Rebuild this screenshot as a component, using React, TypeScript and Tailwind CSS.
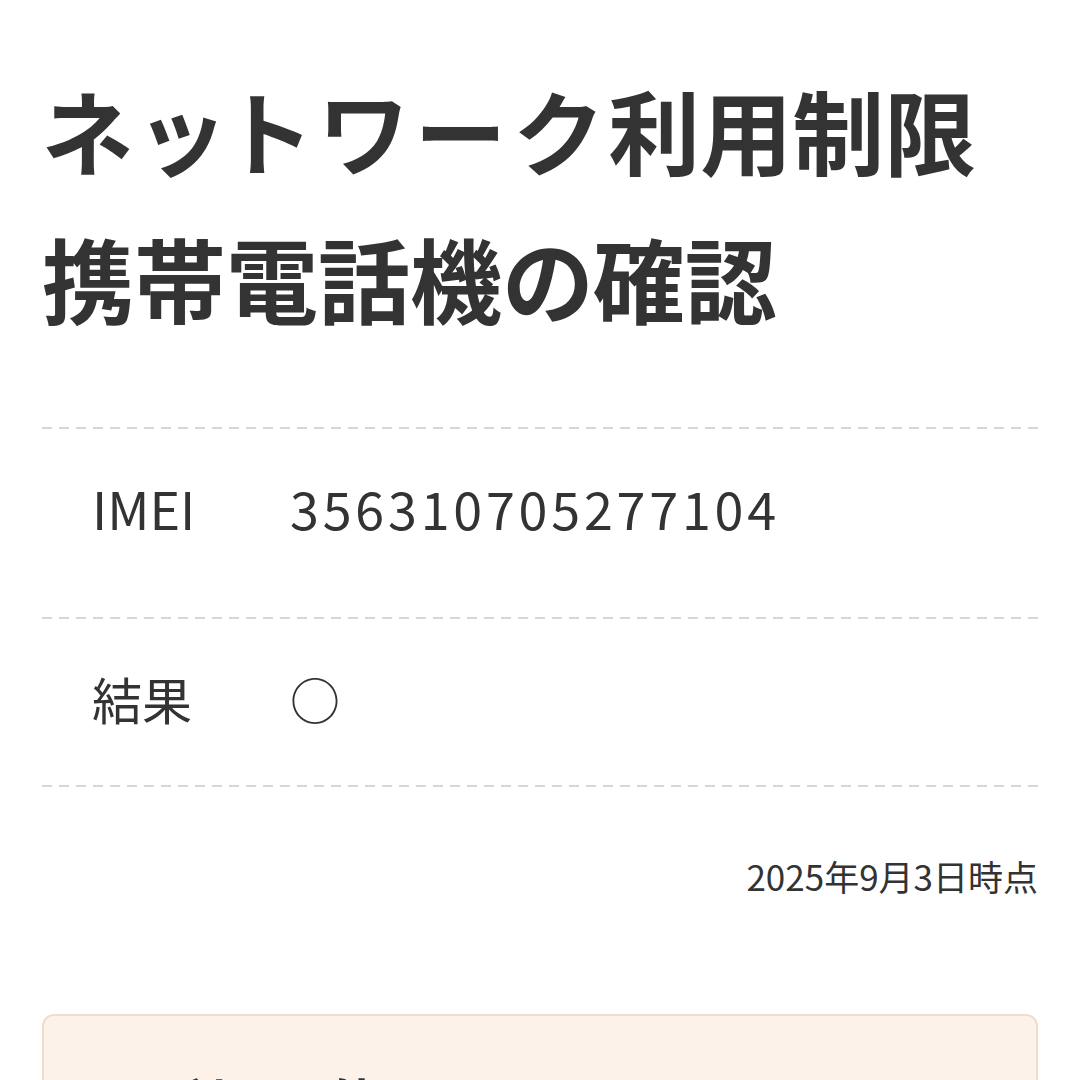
import React from 'react';

const dash =
    'h-[2px] w-full bg-[repeating-linear-gradient(to_right,#d6d6d6_0_10px,transparent_10px_17px)]';

export default function App() {
    return (
        <div
            className="min-h-screen bg-white px-[42px] text-[#333333]"
            style={{ fontFamily: '"Noto Sans CJK JP", "Noto Sans", sans-serif' }}
        >
            <h1 className="pt-[55px] text-[92px] font-bold leading-[148px] [font-feature-settings:'palt']">
                <span className="tracking-[10.5px]">ネットワーク</span>利用制限
                <br />
                携帯電話機の確認
            </h1>

            <div className="mt-[76px]">
                <div className={dash} />

                <div className="flex pl-[50px] pt-[40px] pb-[70px] text-[52px] leading-[78px]">
                    <div className="w-[198px]">IMEI</div>
                    <div className="tracking-[3.8px]">356310705277104</div>
                </div>

                <div className={dash} />

                <div className="flex pl-[50px] pt-[40px] pb-[48px] text-[50px] leading-[78px]">
                    <div className="w-[198px]">結果</div>
                    <div>○</div>
                </div>

                <div className={dash} />
            </div>

            <div className="mt-[65px] text-right text-[35px] leading-[48px]">2025年9月3日時点</div>

            <div className="mt-[114px] rounded-[12px] border-2 border-[#f1ddcc] bg-[#fdf2ea] px-[130px] pt-[46px] pb-10">
                <div className="text-[52px] font-bold leading-[78px]">利用可能</div>
            </div>
        </div>
    );
}
